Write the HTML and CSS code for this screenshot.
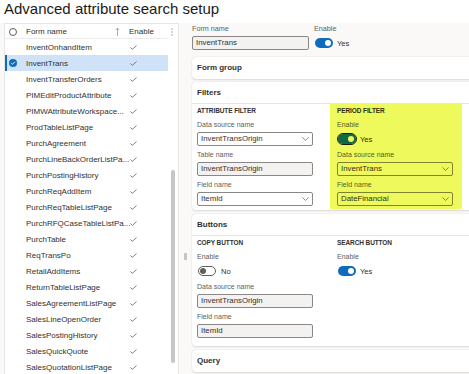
FILE: index.html
```html
<!DOCTYPE html>
<html>
<head>
<meta charset="utf-8">
<title>Advanced attribute search setup</title>
<link rel="stylesheet" href="styles.css">
</head>
<body>
<h1 class="title">Advanced attribute search setup</h1>
<div class="main">
  <div class="grid">
    <div class="grid-head">
      <span class="radio"></span>
      <span class="col-name">Form name</span>
      <svg class="sort" width="5" height="9" viewBox="0 0 5 9"><path d="M2.5 1.2V9M0.6 3.1L2.5 1.2L4.4 3.1" fill="none" stroke="#8a9bb0" stroke-width="0.8"/></svg>
      <span class="col-enable">Enable</span>
      <svg class="more" width="2" height="8" viewBox="0 0 2 8"><circle cx="1" cy="1" r="0.7" fill="#8a8886"/><circle cx="1" cy="4" r="0.7" fill="#8a8886"/><circle cx="1" cy="7" r="0.7" fill="#8a8886"/></svg>
    </div>
    <div class="rows">
      <div class="row"><span class="rsp"></span><span class="name">InventOnhandItem</span><svg class="chk" width="7" height="5" viewBox="0 0 7 5"><path d="M0.5 2.6L2.4 4.4L6.5 0.5" fill="none" stroke="#605e5c" stroke-width="0.8"/></svg></div>
      <div class="row sel"><span class="rsp checked"><svg width="8" height="8" viewBox="0 0 8 8"><path d="M2.2 4.1L3.5 5.3L5.9 2.8" fill="none" stroke="#fff" stroke-width="0.9"/></svg></span><span class="name">InventTrans</span><svg class="chk" width="7" height="5" viewBox="0 0 7 5"><path d="M0.5 2.6L2.4 4.4L6.5 0.5" fill="none" stroke="#605e5c" stroke-width="0.8"/></svg></div>
      <div class="row"><span class="rsp"></span><span class="name">InventTransferOrders</span><svg class="chk" width="7" height="5" viewBox="0 0 7 5"><path d="M0.5 2.6L2.4 4.4L6.5 0.5" fill="none" stroke="#605e5c" stroke-width="0.8"/></svg></div>
      <div class="row"><span class="rsp"></span><span class="name">PIMEditProductAttribute</span><svg class="chk" width="7" height="5" viewBox="0 0 7 5"><path d="M0.5 2.6L2.4 4.4L6.5 0.5" fill="none" stroke="#605e5c" stroke-width="0.8"/></svg></div>
      <div class="row"><span class="rsp"></span><span class="name">PIMWAttributeWorkspace...</span><svg class="chk" width="7" height="5" viewBox="0 0 7 5"><path d="M0.5 2.6L2.4 4.4L6.5 0.5" fill="none" stroke="#605e5c" stroke-width="0.8"/></svg></div>
      <div class="row"><span class="rsp"></span><span class="name">ProdTableListPage</span><svg class="chk" width="7" height="5" viewBox="0 0 7 5"><path d="M0.5 2.6L2.4 4.4L6.5 0.5" fill="none" stroke="#605e5c" stroke-width="0.8"/></svg></div>
      <div class="row"><span class="rsp"></span><span class="name">PurchAgreement</span><svg class="chk" width="7" height="5" viewBox="0 0 7 5"><path d="M0.5 2.6L2.4 4.4L6.5 0.5" fill="none" stroke="#605e5c" stroke-width="0.8"/></svg></div>
      <div class="row"><span class="rsp"></span><span class="name">PurchLineBackOrderListPa...</span><svg class="chk" width="7" height="5" viewBox="0 0 7 5"><path d="M0.5 2.6L2.4 4.4L6.5 0.5" fill="none" stroke="#605e5c" stroke-width="0.8"/></svg></div>
      <div class="row"><span class="rsp"></span><span class="name">PurchPostingHistory</span><svg class="chk" width="7" height="5" viewBox="0 0 7 5"><path d="M0.5 2.6L2.4 4.4L6.5 0.5" fill="none" stroke="#605e5c" stroke-width="0.8"/></svg></div>
      <div class="row"><span class="rsp"></span><span class="name">PurchReqAddItem</span><svg class="chk" width="7" height="5" viewBox="0 0 7 5"><path d="M0.5 2.6L2.4 4.4L6.5 0.5" fill="none" stroke="#605e5c" stroke-width="0.8"/></svg></div>
      <div class="row"><span class="rsp"></span><span class="name">PurchReqTableListPage</span><svg class="chk" width="7" height="5" viewBox="0 0 7 5"><path d="M0.5 2.6L2.4 4.4L6.5 0.5" fill="none" stroke="#605e5c" stroke-width="0.8"/></svg></div>
      <div class="row"><span class="rsp"></span><span class="name">PurchRFQCaseTableListPa...</span><svg class="chk" width="7" height="5" viewBox="0 0 7 5"><path d="M0.5 2.6L2.4 4.4L6.5 0.5" fill="none" stroke="#605e5c" stroke-width="0.8"/></svg></div>
      <div class="row"><span class="rsp"></span><span class="name">PurchTable</span><svg class="chk" width="7" height="5" viewBox="0 0 7 5"><path d="M0.5 2.6L2.4 4.4L6.5 0.5" fill="none" stroke="#605e5c" stroke-width="0.8"/></svg></div>
      <div class="row"><span class="rsp"></span><span class="name">ReqTransPo</span><svg class="chk" width="7" height="5" viewBox="0 0 7 5"><path d="M0.5 2.6L2.4 4.4L6.5 0.5" fill="none" stroke="#605e5c" stroke-width="0.8"/></svg></div>
      <div class="row"><span class="rsp"></span><span class="name">RetailAddItems</span><svg class="chk" width="7" height="5" viewBox="0 0 7 5"><path d="M0.5 2.6L2.4 4.4L6.5 0.5" fill="none" stroke="#605e5c" stroke-width="0.8"/></svg></div>
      <div class="row"><span class="rsp"></span><span class="name">ReturnTableListPage</span><svg class="chk" width="7" height="5" viewBox="0 0 7 5"><path d="M0.5 2.6L2.4 4.4L6.5 0.5" fill="none" stroke="#605e5c" stroke-width="0.8"/></svg></div>
      <div class="row"><span class="rsp"></span><span class="name">SalesAgreementListPage</span><svg class="chk" width="7" height="5" viewBox="0 0 7 5"><path d="M0.5 2.6L2.4 4.4L6.5 0.5" fill="none" stroke="#605e5c" stroke-width="0.8"/></svg></div>
      <div class="row"><span class="rsp"></span><span class="name">SalesLineOpenOrder</span><svg class="chk" width="7" height="5" viewBox="0 0 7 5"><path d="M0.5 2.6L2.4 4.4L6.5 0.5" fill="none" stroke="#605e5c" stroke-width="0.8"/></svg></div>
      <div class="row"><span class="rsp"></span><span class="name">SalesPostingHistory</span><svg class="chk" width="7" height="5" viewBox="0 0 7 5"><path d="M0.5 2.6L2.4 4.4L6.5 0.5" fill="none" stroke="#605e5c" stroke-width="0.8"/></svg></div>
      <div class="row"><span class="rsp"></span><span class="name">SalesQuickQuote</span><svg class="chk" width="7" height="5" viewBox="0 0 7 5"><path d="M0.5 2.6L2.4 4.4L6.5 0.5" fill="none" stroke="#605e5c" stroke-width="0.8"/></svg></div>
      <div class="row"><span class="rsp"></span><span class="name">SalesQuotationListPage</span><svg class="chk" width="7" height="5" viewBox="0 0 7 5"><path d="M0.5 2.6L2.4 4.4L6.5 0.5" fill="none" stroke="#605e5c" stroke-width="0.8"/></svg></div>
    </div>
    <div class="scrollbar"></div>
  </div>
  <div class="splitter"><div class="handle"></div></div>
  <div class="detail">
    <div class="top-row">
      <div class="top-field">
        <div class="top-label">Form name</div>
        <div class="input ro">InventTrans</div>
      </div>
      <div class="top-field">
        <div class="top-label">Enable</div>
        <div class="toggle-row"><span class="toggle on"></span><span class="tlabel">Yes</span></div>
      </div>
    </div>

    <div class="card card-first"><div class="card-head">Form group</div></div>

    <div class="card card-gap3">
      <div class="card-head lined">Filters</div>
      <div class="section sec-filters">
        <div class="col col-left">
          <div class="heading">ATTRIBUTE FILTER</div>
          <div class="label">Data source name</div>
          <div class="input dd">InventTransOrigin<svg class="chev" width="7" height="4" viewBox="0 0 7 4"><path d="M0.4 0.4L3.5 3.4L6.6 0.4" fill="none" stroke="#605e5c" stroke-width="0.7"/></svg></div>
          <div class="label">Table name</div>
          <div class="input ro">InventTransOrigin</div>
          <div class="label">Field name</div>
          <div class="input dd last">ItemId<svg class="chev" width="7" height="4" viewBox="0 0 7 4"><path d="M0.4 0.4L3.5 3.4L6.6 0.4" fill="none" stroke="#605e5c" stroke-width="0.7"/></svg></div>
        </div>
        <div class="col col-hl">
          <div class="heading">PERIOD FILTER</div>
          <div class="label">Enable</div>
          <div class="toggle-row field"><span class="toggle on focus"></span><span class="tlabel">Yes</span></div>
          <div class="label">Data source name</div>
          <div class="input dd">InventTrans<svg class="chev" width="7" height="4" viewBox="0 0 7 4"><path d="M0.4 0.4L3.5 3.4L6.6 0.4" fill="none" stroke="#5d6024" stroke-width="0.7"/></svg></div>
          <div class="label">Field name</div>
          <div class="input dd last">DateFinancial<svg class="chev" width="7" height="4" viewBox="0 0 7 4"><path d="M0.4 0.4L3.5 3.4L6.6 0.4" fill="none" stroke="#5d6024" stroke-width="0.7"/></svg></div>
        </div>
      </div>
    </div>

    <div class="card">
      <div class="card-head lined">Buttons</div>
      <div class="section sec-buttons">
        <div class="col col-left">
          <div class="heading">COPY BUTTON</div>
          <div class="label">Enable</div>
          <div class="toggle-row field"><span class="toggle off"></span><span class="tlabel tl-no">No</span></div>
          <div class="label">Data source name</div>
          <div class="input ro">InventTransOrigin</div>
          <div class="label">Field name</div>
          <div class="input ro last">ItemId</div>
        </div>
        <div class="col col-right">
          <div class="heading">SEARCH BUTTON</div>
          <div class="label">Enable</div>
          <div class="toggle-row field"><span class="toggle on"></span><span class="tlabel">Yes</span></div>
        </div>
      </div>
    </div>

    <div class="card"><div class="card-head">Query</div></div>
  </div>
</div>
</body>
</html>
```
FILE: styles.css
```css
html, body {
  margin: 0;
  padding: 0;
}
body {
  width: 469px;
  height: 374px;
  overflow: hidden;
  background: #ffffff;
  font-family: "Liberation Sans", Arial, sans-serif;
  color: #323130;
}
.title {
  margin: 0;
  height: 23px;
  line-height: 17px;
  padding-left: 4px;
  font-size: 15px;
  font-weight: normal;
  color: #1b1a19;
  white-space: nowrap;
}
.main {
  display: flex;
  height: 351px;
  overflow: hidden;
  background: #faf9f8;
}
/* grid */
.grid {
  position: relative;
  margin-left: 4px;
  width: 173px;
  flex: none;
  background: #ffffff;
  border: 1px solid #e8e6e4;
  border-bottom: none;
  overflow: hidden;
}
.grid-head {
  display: flex;
  align-items: center;
  height: 15px;
  padding-left: 4px;
  background: linear-gradient(#edebe9, #edebe9) no-repeat 0 100% / 163px 1px;
  font-size: 8px;
}
.radio {
  width: 8px;
  height: 8px;
  box-sizing: border-box;
  border: 1px solid #605e5c;
  border-radius: 50%;
  flex: none;
}
.col-name {
  margin-left: 9px;
  width: 89px;
  flex: none;
}
.sort { flex: none; }
.col-enable {
  margin-left: 9px;
}
.more {
  margin-left: auto;
  margin-right: 5px;
  flex: none;
}
.rows {
  width: 163px;
}
.row {
  display: flex;
  align-items: center;
  height: 16px;
  padding-left: 4px;
  font-size: 8px;
  white-space: nowrap;
}
.row.sel {
  background: #cfe2f8;
  box-shadow: inset 2px 0 0 #0f6cbd;
}
.rsp {
  width: 8px;
  height: 8px;
  flex: none;
  border-radius: 50%;
}
.rsp.checked {
  background: #0f6cbd;
}
.rsp.checked svg { display: block; }
.name {
  margin-left: 9px;
  width: 104px;
  flex: none;
  overflow: hidden;
}
.chk { flex: none; }
.scrollbar {
  position: absolute;
  left: 166px;
  top: 146px;
  width: 4px;
  height: 193px;
  border-radius: 2px;
  background: #c8c6c4;
}
/* splitter */
.splitter {
  width: 11px;
  flex: none;
}
.handle {
  margin: 230px 0 0 5px;
  width: 3px;
  height: 7px;
  background: #c8c6c4;
}
/* detail */
.detail {
  flex: 1;
  min-width: 0;
  padding: 1px 0 0 2px;
  overflow: hidden;
}
.top-row {
  display: flex;
  gap: 5px;
}
.top-field:first-child { width: 117px; }
.top-label {
  height: 10px;
  line-height: 10px;
  font-size: 7.2px;
  color: #605e5c;
  margin-bottom: 2px;
  white-space: nowrap;
}
.input {
  position: relative;
  height: 14px;
  box-sizing: border-box;
  border: 1px solid #8a8886;
  border-radius: 2px;
  padding-left: 3px;
  line-height: 12px;
  font-size: 7.8px;
  color: #323130;
  white-space: nowrap;
  margin-bottom: 4px;
}
.input.ro { background: #f3f2f1; }
.input.dd { background: transparent; }
.input.last { margin-bottom: 0; }
.top-field .input { margin-bottom: 0; }
.chev {
  position: absolute;
  right: 3px;
  top: 4px;
}
.toggle-row {
  display: flex;
  align-items: center;
  height: 14px;
}
.toggle-row.field { margin-bottom: 4px; }
.toggle {
  position: relative;
  margin-left: 1px;
  width: 18px;
  height: 10px;
  box-sizing: border-box;
  border-radius: 5px;
  flex: none;
}
.toggle::after {
  content: "";
  position: absolute;
  top: 2px;
  width: 6px;
  height: 6px;
  border-radius: 50%;
}
.toggle.on { background: #0f6cbd; }
.toggle.on::after { right: 2px; background: #ffffff; }
.toggle.off { background: #ffffff; border: 1px solid #605e5c; }
.toggle.off::after { left: 1px; top: 1px; background: #605e5c; }
.tlabel {
  margin-left: 4px;
  font-size: 7.6px;
  color: #323130;
}
.tl-no { margin-left: 5px; }
/* cards */
.card {
  width: 300px;
  background: #ffffff;
  border-radius: 4px;
  box-shadow: 0 0.6px 1.8px rgba(0, 0, 0, 0.13), 0 0 0.8px rgba(0, 0, 0, 0.1);
  margin-top: 4px;
}
.card-first { margin-top: 7px; }
.card-gap3 { margin-top: 3px; }
.card-head {
  height: 22px;
  line-height: 22px;
  padding-left: 5px;
  font-size: 8px;
  font-weight: bold;
  color: #323130;
  box-sizing: border-box;
}
.card-head.lined {
  border-bottom: 1px solid #e8e6e4;
}
.section {
  display: flex;
  align-items: stretch;
}
.sec-filters { padding-bottom: 1px; }
.sec-buttons { padding-bottom: 5px; }
.col {
  width: 116px;
  padding: 2px 0 3px;
  flex: none;
}
.col-left { margin-left: 5px; }
.col-right { margin-left: 24px; }
.col-hl {
  margin-left: 17px;
  padding: 2px 9px 3px 7px;
  background: #eefa5c;
}
.heading {
  height: 10px;
  line-height: 10px;
  font-size: 6.5px;
  font-weight: bold;
  letter-spacing: -0.1px;
  color: #323130;
  margin-bottom: 4px;
  white-space: nowrap;
}
.label {
  height: 10px;
  line-height: 10px;
  font-size: 7px;
  color: #605e5c;
  margin-bottom: 2px;
  white-space: nowrap;
}
.col-hl .label { color: #5a5d22; }
.col-hl .heading, .col-hl .tlabel, .col-hl .input { color: #2f3011; }
.col-hl .input { border-color: #7f832f; }
.col-hl .toggle.on {
  background: #0e6a45;
  outline: 1px solid #1c1d0a;
}
.col-hl .toggle.on::after { background: #eefa5c; }
```
